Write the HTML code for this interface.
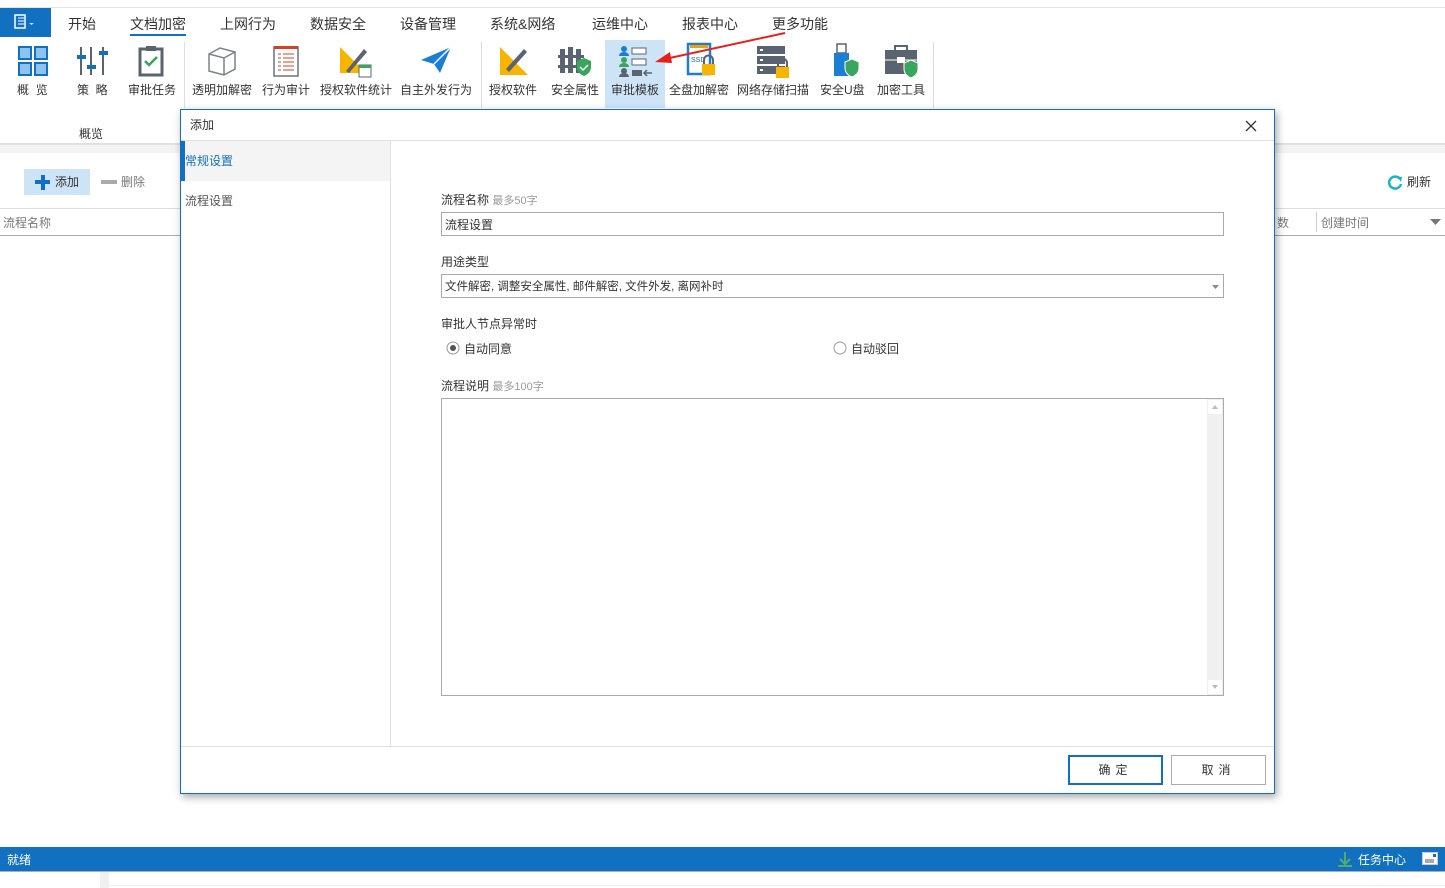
<!DOCTYPE html>
<html><head><meta charset="utf-8"><style>
*{box-sizing:border-box;margin:0;padding:0}
body{width:1445px;height:888px;position:relative;overflow:hidden;background:#fff;font-family:"Liberation Sans","Noto Sans CJK SC",sans-serif;font-size:12px;color:#333}
.a{position:absolute}
.tab{position:absolute;top:14px;font-size:14px;color:#333}
.lbl{position:absolute;top:81px;font-size:12px;color:#333;white-space:nowrap;text-align:center}
.ic{position:absolute;top:44px}
.sep{position:absolute;top:42px;width:1px;height:66px;background:#ddd}
</style></head><body>
<div class="a" style="left:0;top:7px;width:1445px;height:1px;background:#e4e4e4"></div>
<div class="a" style="left:0;top:8px;width:51px;height:29px;background:#1170c0"></div>
<svg class="a" style="left:14px;top:14px" width="24" height="16"><rect x="1" y="1" width="10" height="13" fill="none" stroke="#fff" stroke-width="1.5"/><path d="M4 4h6M4 7h6M4 10h6" stroke="#fff"/><path d="M15 9h5l-2.5 2z" fill="#cde"/></svg>
<div class="tab" style="left:68px">开始</div>
<div class="tab" style="left:130px">文档加密</div>
<div class="a" style="left:130px;top:34px;width:56px;height:2px;background:#1170c0"></div>
<div class="tab" style="left:220px">上网行为</div>
<div class="tab" style="left:310px">数据安全</div>
<div class="tab" style="left:400px">设备管理</div>
<div class="tab" style="left:490px">系统&amp;网络</div>
<div class="tab" style="left:592px">运维中心</div>
<div class="tab" style="left:682px">报表中心</div>
<div class="tab" style="left:772px">更多功能</div>

<svg class="ic" style="left:17px;top:45px" width="32" height="32"><g fill="#8ec3f0" stroke="#1170c0" stroke-width="2"><rect x="2" y="2" width="12" height="12"/><rect x="18" y="2" width="12" height="12"/><rect x="2" y="18" width="12" height="12"/><rect x="18" y="18" width="12" height="12"/></g></svg>
<div class="lbl" style="left:17px">概&nbsp;&nbsp;览</div>
<svg class="ic" style="left:77px;top:45px" width="32" height="32"><path d="M4 2v28M14 2v28M26 2v28" stroke="#5a6470" stroke-width="2"/><rect x="0" y="10" width="9" height="4" fill="#1170c0"/><rect x="10" y="20" width="9" height="4" fill="#1170c0"/><rect x="22" y="6" width="9" height="4" fill="#1170c0"/></svg>
<div class="lbl" style="left:77px">策&nbsp;&nbsp;略</div>
<svg class="ic" style="left:138px;top:45px" width="28" height="32"><rect x="2" y="4" width="22" height="26" fill="none" stroke="#5a6470" stroke-width="3"/><rect x="8" y="1" width="10" height="5" fill="#5a6470"/><path d="M7 16l4 4 8-8" fill="none" stroke="#3aa55c" stroke-width="2.5"/></svg>
<div class="lbl" style="left:128px">审批任务</div>
<div class="sep" style="left:184px"></div>
<svg class="ic" style="left:206px;top:45px" width="32" height="32"><path d="M3 9L14 3 29 7 29 24 18 30 3 26z M3 9L18 13 29 7 M18 13V30" fill="none" stroke="#7a828c" stroke-width="1.5"/></svg>
<div class="lbl" style="left:192px">透明加解密</div>
<svg class="ic" style="left:273px;top:45px" width="26" height="32"><rect x="1" y="2" width="24" height="29" fill="#fff" stroke="#6a727c" stroke-width="1.5"/><rect x="1" y="1" width="24" height="3" fill="#d84020"/><path d="M5 9h3M10 9h11M5 13h3M10 13h11M5 17h3M10 17h11M5 21h3M10 21h11M5 25h3M10 25h11" stroke="#d84020"/></svg>
<div class="lbl" style="left:262px">行为审计</div>
<svg class="ic" style="left:338px;top:45px" width="34" height="34"><path d="M2 2L2 28 28 28z" fill="#f7b500"/><path d="M8 26L26 4 29 7 11 28z" fill="#5a6470"/><rect x="21" y="20" width="12" height="12" fill="#fff" stroke="#5a6470"/><rect x="21" y="20" width="12" height="3" fill="#3aa55c"/></svg>
<div class="lbl" style="left:320px">授权软件统计</div>
<svg class="ic" style="left:420px;top:46px" width="32" height="28"><path d="M1 14L31 1 20 27 14 18z" fill="#1a7fd4"/><path d="M14 18L31 1" stroke="#fff" stroke-width="1.5"/></svg>
<div class="lbl" style="left:400px">自主外发行为</div>
<div class="sep" style="left:481px"></div>
<svg class="ic" style="left:498px;top:45px" width="34" height="32"><path d="M2 2L2 30 30 30z" fill="#f7b500"/><path d="M8 24L26 4 29 7 11 27z" fill="#5a6470"/></svg>
<div class="lbl" style="left:489px">授权软件</div>
<svg class="ic" style="left:558px;top:45px" width="34" height="34"><g fill="#5a6470"><rect x="2" y="4" width="5" height="24"/><rect x="10" y="2" width="5" height="26"/><rect x="18" y="4" width="5" height="24"/><rect x="0" y="10" width="26" height="3"/><rect x="0" y="20" width="26" height="3"/></g><path d="M19 16l7-3 7 3v6c0 5-4 8-7 9-3-1-7-4-7-9z" fill="#3aa55c"/><path d="M22 22l3 3 5-5" stroke="#fff" stroke-width="1.5" fill="none"/></svg>
<div class="lbl" style="left:551px">安全属性</div>
<div class="a" style="left:605px;top:40px;width:60px;height:68px;background:#cde4f7"></div>
<svg class="ic" style="left:618px;top:45px" width="36" height="32"><circle cx="6" cy="4" r="3" fill="#1a7fd4"/><path d="M1 11a5 4 0 0 1 10 0z" fill="#1a7fd4"/><circle cx="6" cy="15" r="3" fill="#3aa55c"/><path d="M1 22a5 4 0 0 1 10 0z" fill="#3aa55c"/><circle cx="6" cy="26" r="3" fill="#5a6470"/><path d="M1 32a5 4 0 0 1 10 0z" fill="#5a6470"/><rect x="14" y="3" width="14" height="6" fill="#fff" stroke="#5a6470"/><rect x="14" y="14" width="14" height="6" fill="#fff" stroke="#5a6470"/><rect x="14" y="25" width="10" height="6" fill="#5a6470"/><path d="M34 28h-8M29 25l-3 3 3 3" stroke="#5a6470" fill="none" stroke-width="1.5"/></svg>
<div class="lbl" style="left:611px">审批模板</div>
<svg class="ic" style="left:686px;top:42px" width="32" height="36"><rect x="2" y="2" width="22" height="30" fill="#fff" stroke="#1a7fd4" stroke-width="2.5"/><rect x="4" y="3" width="18" height="3" fill="#f0a000"/><text x="5" y="20" font-size="7" fill="#1a5fa0" font-family="Liberation Sans">SSD</text><rect x="16" y="22" width="13" height="11" fill="#f7b500"/><path d="M18 22v-4a4.5 4.5 0 0 1 9 0v4" fill="none" stroke="#5a6470" stroke-width="2"/></svg>
<div class="lbl" style="left:669px">全盘加解密</div>
<svg class="ic" style="left:757px;top:45px" width="34" height="34"><g fill="#5a6470"><rect x="0" y="1" width="28" height="8"/><rect x="0" y="11" width="28" height="8"/><rect x="0" y="21" width="28" height="8"/></g><path d="M3 5h3M3 15h3M3 25h3" stroke="#fff" stroke-width="2"/><rect x="19" y="22" width="13" height="11" fill="#f7b500"/><path d="M21 22v-4a4.5 4.5 0 0 1 9 0v4" fill="none" stroke="#5a6470" stroke-width="2"/></svg>
<div class="lbl" style="left:737px">网络存储扫描</div>
<svg class="ic" style="left:832px;top:42px" width="30" height="36"><rect x="5" y="2" width="9" height="9" fill="#fff" stroke="#5a6470" stroke-width="1.5"/><rect x="2" y="11" width="15" height="23" fill="#1a7fd4"/><path d="M13 20l7-3 7 3v6c0 5-4 8-7 9-3-1-7-4-7-9z" fill="#3aa55c" stroke="#fff"/></svg>
<div class="lbl" style="left:820px">安全U盘</div>
<svg class="ic" style="left:885px;top:45px" width="34" height="34"><rect x="10" y="1" width="12" height="5" fill="none" stroke="#5a6470" stroke-width="2"/><rect x="0" y="5" width="32" height="24" fill="#5a6470"/><path d="M0 15h32" stroke="#fff"/><rect x="12" y="12" width="8" height="6" fill="#fff"/><path d="M19 18l7-3 7 3v6c0 5-4 8-7 9-3-1-7-4-7-9z" fill="#3aa55c" stroke="#fff"/></svg>
<div class="lbl" style="left:877px">加密工具</div>
<div class="sep" style="left:933px"></div>
<div class="a" style="left:79px;top:125px;font-size:12px">概览</div>
<div class="a" style="left:0;top:143px;width:1445px;height:2px;background:#e0e0e0"></div>
<div class="a" style="left:0;top:145px;width:1445px;height:8px;background:#f3f3f3"></div>
<svg class="a" style="left:0;top:0" width="800" height="70"><path d="M785 33L665 59" stroke="#e8201c" stroke-width="2"/><path d="M655 62L670 52 672 63z" fill="#e8201c"/></svg>

<div class="a" style="left:24px;top:169px;width:66px;height:26px;background:#cde4f7"></div>
<div class="a" style="left:35px;top:180px;width:15px;height:4px;background:#1170c0"></div>
<div class="a" style="left:40.5px;top:175px;width:4px;height:15px;background:#1170c0"></div>
<div class="a" style="left:55px;top:173px;font-size:12px">添加</div>
<div class="a" style="left:101px;top:180px;width:16px;height:4px;background:#aaa"></div>
<div class="a" style="left:121px;top:173px;color:#777">删除</div>
<svg class="a" style="left:1387px;top:174px" width="16" height="16"><path d="M13 5A6 6 0 1 0 14 10" fill="none" stroke="#18b5c8" stroke-width="2.5"/><path d="M10 2l5 1-1 5z" fill="#18b5c8"/></svg>
<div class="a" style="left:1407px;top:173px">刷新</div>
<div class="a" style="left:0;top:208px;width:1445px;height:1px;background:#ddd"></div>
<div class="a" style="left:3px;top:214px;color:#777">流程名称</div>
<div class="a" style="left:1277px;top:214px;color:#777">数</div>
<div class="a" style="left:1316px;top:212px;width:1px;height:20px;background:#ccc"></div>
<div class="a" style="left:1321px;top:214px;color:#777">创建时间</div>
<svg class="a" style="left:1430px;top:219px" width="12" height="6"><path d="M0 0h11L5.5 6z" fill="#777"/></svg>
<div class="a" style="left:0;top:235px;width:1445px;height:1px;background:#aaa"></div>

<div class="a" style="left:0;top:847px;width:1445px;height:24px;background:#1170c0"></div>
<div class="a" style="left:7px;top:851px;color:#fff">就绪</div>
<svg class="a" style="left:1337px;top:851px" width="16" height="16"><path d="M8 1v12M3 8l5 5 5-5M1 15h14" stroke="#4caf70" stroke-width="2" fill="none"/></svg>
<div class="a" style="left:1358px;top:851px;color:#fff">任务中心</div>
<svg class="a" style="left:1422px;top:852px" width="16" height="13"><rect x="0.5" y="0.5" width="15" height="12" fill="#fff" stroke="#ccc"/><path d="M3 8h9M3 10h9" stroke="#555"/><rect x="11" y="2" width="3" height="3" fill="#1170c0"/></svg>
<div class="a" style="left:0;top:871px;width:1445px;height:1px;background:#aac"></div>
<div class="a" style="left:100px;top:872px;width:9px;height:16px;background:#f0f0f0"></div>
<div class="a" style="left:109px;top:885px;width:1336px;height:1px;background:#eee"></div>

<div class="a" style="left:180px;top:109px;width:1095px;height:685px;background:#fff;border:1px solid #1170c0;box-shadow:2px 3px 8px rgba(0,0,0,.35)">
 <div class="a" style="left:9px;top:6px;font-size:12px">添加</div>
 <svg class="a" style="left:1064px;top:10px" width="12" height="12"><path d="M1 1l10 10M11 1L1 11" stroke="#333" stroke-width="1.3"/></svg>
 <div class="a" style="left:0;top:30px;width:1093px;height:1px;background:#e0e0e0"></div>
 <div class="a" style="left:0;top:31px;width:209px;height:40px;background:#f4f4f4"></div>
 <div class="a" style="left:0;top:31px;width:4px;height:40px;background:#1170c0"></div>
 <div class="a" style="left:4px;top:42px;color:#1170c0">常规设置</div>
 <div class="a" style="left:4px;top:82px;color:#555">流程设置</div>
 <div class="a" style="left:209px;top:31px;width:1px;height:605px;background:#e0e0e0"></div>
 <div class="a" style="left:260px;top:81px">流程名称 <span style="color:#999;font-size:11px">最多50字</span></div>
 <div class="a" style="left:260px;top:102px;width:783px;height:24px;border:1px solid #aaa;padding:3px 3px">流程设置</div>
 <div class="a" style="left:260px;top:143px">用途类型</div>
 <div class="a" style="left:260px;top:164px;width:783px;height:24px;border:1px solid #aaa;padding:3px 3px;font-size:11.5px">文件解密, 调整安全属性, 邮件解密, 文件外发, 离网补时</div>
 <svg class="a" style="left:1031px;top:175px" width="7" height="4"><path d="M0 0h7L3.5 4z" fill="#888"/></svg>
 <div class="a" style="left:260px;top:205px">审批人节点异常时</div>
 <svg class="a" style="left:265px;top:231px" width="14" height="14"><circle cx="7" cy="7" r="6" fill="#fff" stroke="#999"/><circle cx="7" cy="7" r="3" fill="#555"/></svg>
 <div class="a" style="left:283px;top:230px">自动同意</div>
 <svg class="a" style="left:652px;top:231px" width="14" height="14"><circle cx="7" cy="7" r="6" fill="#fff" stroke="#999"/></svg>
 <div class="a" style="left:670px;top:230px">自动驳回</div>
 <div class="a" style="left:260px;top:267px">流程说明 <span style="color:#999;font-size:11px">最多100字</span></div>
 <div class="a" style="left:260px;top:288px;width:783px;height:298px;border:1px solid #aaa"></div>
 <div class="a" style="left:1026px;top:289px;width:16px;height:296px;background:#f0f0f0"></div>
 <div class="a" style="left:1027px;top:290px;width:14px;height:14px;background:#fff"><svg width="14" height="14"><path d="M4 9h6L7 5z" fill="#bbb"/></svg></div>
 <div class="a" style="left:1027px;top:570px;width:14px;height:14px;background:#fff"><svg width="14" height="14"><path d="M4 5h6L7 9z" fill="#bbb"/></svg></div>
 <div class="a" style="left:0;top:636px;width:1093px;height:1px;background:#e0e0e0"></div>
 <div class="a" style="left:887px;top:645px;width:95px;height:30px;border:2px solid #1170c0;text-align:center;line-height:26px;letter-spacing:5px">确定</div>
 <div class="a" style="left:990px;top:645px;width:95px;height:30px;border:1px solid #aaa;text-align:center;line-height:28px;letter-spacing:5px">取消</div>
</div>
</body></html>
